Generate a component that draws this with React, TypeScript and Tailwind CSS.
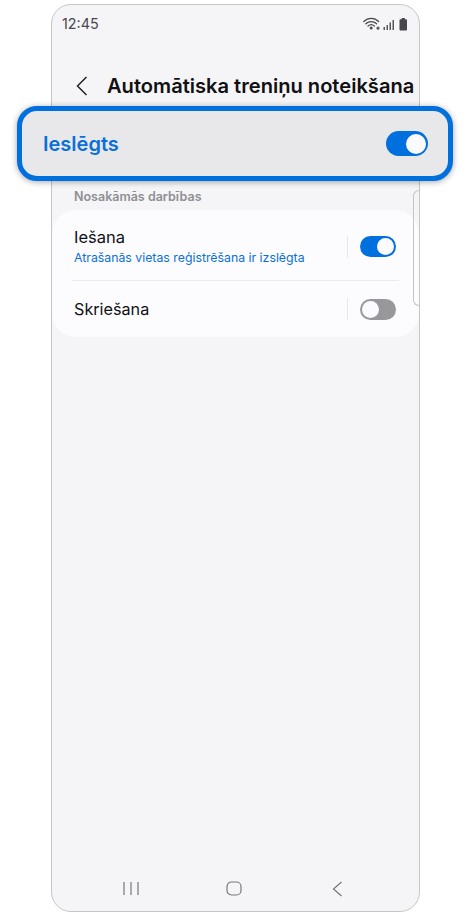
const font = { fontFamily: "Inter, 'Noto Sans', sans-serif" };

const Toggle = ({ on, large = false }: { on: boolean; large?: boolean }) => (
  <div
    className={
      large
        ? "flex h-[25px] w-[42px] items-center justify-end rounded-full bg-[#0070de] pr-[2px]"
        : on
          ? "flex h-[21px] w-[36px] items-center justify-end rounded-full bg-[#0070de] pr-[2px]"
          : "flex h-[21px] w-[36px] items-center justify-start rounded-full bg-[#98979c] pl-[2px]"
    }
  >
    <div className={large ? "h-[20px] w-[20px] rounded-full bg-[#fbfbff]" : "h-[17px] w-[17px] rounded-full bg-[#fbfbff]"} />
  </div>
);

const StatusIcons = () => (
  <svg width="46" height="14" viewBox="0 0 46 14" fill="none">
    <g stroke="#48484c" strokeWidth="1.2" strokeLinecap="round">
      <path d="M0.8 4.5C5 0.2 11.5 0.2 15.6 4.5" />
      <path d="M2.8 6.8C6 3.8 10.4 3.8 13.6 6.8" />
      <path d="M5 9C6.8 7.4 9.6 7.4 11.4 9" />
    </g>
    <circle cx="8.2" cy="11" r="1.5" fill="#48484c" />
    <path d="M15 9.5V13M13.3 11.2H16.7" stroke="#48484c" strokeWidth="1.2" />
    <g fill="#55555a">
      <rect x="20.5" y="10" width="1.5" height="3" />
      <rect x="23.5" y="8" width="1.5" height="5" />
      <rect x="26.5" y="5.5" width="1.5" height="7.5" />
      <rect x="29.5" y="3" width="1.5" height="10" />
    </g>
    <path d="M36.5 3.2C36.5 2.5 37 2.2 37.6 2.2H38.6V1H41.8V2.2H42.8C43.5 2.2 44 2.5 44 3.2V12.4C44 13.1 43.5 13.4 42.8 13.4H37.6C37 13.4 36.5 13.1 36.5 12.4Z" fill="#48484c" />
  </svg>
);

export default function App() {
  return (
    <div className="h-[915px] w-[470px] overflow-hidden bg-white pt-[4px] pl-[51px]" style={font}>
      <div className="relative flex h-[908px] w-[369px] flex-col rounded-[20px] border border-[#c6c6c8] bg-[#f5f5f8]">
        <div className="flex h-[38px] items-center justify-between pr-[10px] pl-[10px]">
          <span className="text-[14.3px] text-[#48484c]">12:45</span>
          <StatusIcons />
        </div>

        <div className="mt-[21px] flex h-[44px] items-center pl-[24px]">
          <svg width="12" height="20" viewBox="0 0 12 20" fill="none" stroke="#222" strokeWidth="1.5" className="shrink-0">
            <path d="M10.5 1L1.5 10L10.5 19" />
          </svg>
          <span className="ml-[19px] whitespace-nowrap text-[20.1px] font-semibold text-[#111113]">
            Automātiska treniņu noteikšana
          </span>
        </div>

        <div className="z-10 -ml-[35px] -mr-[34px] mt-[-2px] flex h-[75px] items-center justify-between rounded-[20px] border-[5px] border-[#0070de] bg-[#e8e8ea] pr-[20px] pl-[21px] shadow-[0_1px_6px_rgba(0,0,0,0.35)]">
          <span className="text-[20px] font-semibold text-[#0a70d8]">Ieslēgts</span>
          <Toggle on large />
        </div>

        <div className="mt-[8px] pl-[22px] text-[12.5px] font-semibold leading-[15px] text-[#8f8f93]">Nosakāmās darbības</div>

        <div className="relative mt-[6px] flex h-[127px] flex-col rounded-[24px] bg-[#fcfcff] px-[20px]">
          <div className="flex h-[71px] items-center justify-between border-b border-[#ebebee] pt-[3px] pr-[3px] pl-[2px]">
            <div>
              <div className="text-[16.5px] leading-[22px] text-[#111113]">Iešana</div>
              <div className="text-[12.3px] leading-[19px] text-[#0a70d8]">Atrašanās vietas reģistrēšana ir izslēgta</div>
            </div>
            <div className="flex items-center">
              <div className="mr-[12px] h-[22px] w-px bg-[#e6e6e9]" />
              <Toggle on />
            </div>
          </div>
          <div className="flex flex-1 items-center justify-between pr-[3px] pl-[2px]">
            <div className="text-[16.2px] text-[#111113]">Skriešana</div>
            <div className="flex items-center">
              <div className="mr-[12px] h-[22px] w-px bg-[#e6e6e9]" />
              <Toggle on={false} />
            </div>
          </div>
        </div>

        {/* scrollbar */}
        <div className="absolute right-[-1px] top-[185px] h-[116px] w-[7px] rounded-l-[6px] border border-r-0 border-[#c4c4c6]" />

        <div className="mt-auto flex h-[44px] items-center justify-between pr-[76px] pl-[71px] pb-[1px]">
          <svg width="16" height="15" viewBox="0 0 16 15" fill="none" stroke="#77777b" strokeWidth="1.2">
            <path d="M1 1V14M8 1V14M15 1V14" />
          </svg>
          <svg width="16" height="15" viewBox="0 0 16 15" fill="none" stroke="#77777b" strokeWidth="1.2" className="-ml-[3px]">
            <rect x="1" y="1" width="14" height="13" rx="4.5" />
          </svg>
          <svg width="11" height="16" viewBox="0 0 11 16" fill="none" stroke="#77777b" strokeWidth="1.2">
            <path d="M9.5 1L1.5 8L9.5 15" />
          </svg>
        </div>
      </div>
    </div>
  );
}
